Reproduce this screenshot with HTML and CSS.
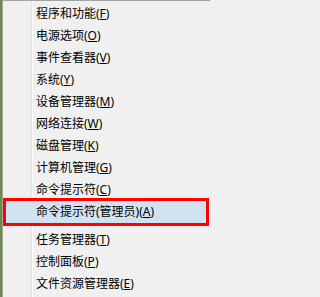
FILE: index.html
```html
<!DOCTYPE html>
<html lang="zh-CN">
<head>
<meta charset="utf-8">
<title>Win+X 菜单</title>
<link rel="stylesheet" href="styles.css">
</head>
<body>
<div class="screen">
  <div class="desktop-edge"></div>
  <ul class="menu">
    <li class="item">程序和功能(<u>F</u>)</li>
    <li class="item">电源选项(<u>O</u>)</li>
    <li class="item">事件查看器(<u>V</u>)</li>
    <li class="item">系统(<u>Y</u>)</li>
    <li class="item">设备管理器(<u>M</u>)</li>
    <li class="item">网络连接(<u>W</u>)</li>
    <li class="item">磁盘管理(<u>K</u>)</li>
    <li class="item">计算机管理(<u>G</u>)</li>
    <li class="item">命令提示符(<u>C</u>)</li>
    <li class="item item-active">命令提示符(管理员)(<u>A</u>)</li>
    <li class="separator"></li>
    <li class="item">任务管理器(<u>T</u>)</li>
    <li class="item">控制面板(<u>P</u>)</li>
    <li class="item">文件资源管理器(<u>E</u>)</li>
  </ul>
</div>
</body>
</html>
```

FILE: styles.css
```css
html, body {
  margin: 0;
  padding: 0;
  background: #f0f0f0;
}

.screen {
  display: flex;
  width: 210px;
  height: 297px;
  overflow: hidden;
  background: #f0f0f0;
}

.desktop-edge {
  flex: 0 0 2px;
  background: #6a8a45;
}

.menu {
  flex: 1 1 auto;
  margin: 0;
  padding: 2px 0 0 0;
  list-style: none;
  border-top: 1px solid #a3a3a3;
  border-left: 1px solid #a8a8a8;
  background-color: #f0f0f0;
  background-image: linear-gradient(to right,
    transparent 28px,
    #e2e3e3 28px, #e2e3e3 29px,
    #ffffff 29px, #ffffff 30px,
    transparent 30px);
  font-family: "Noto Sans", "Noto Sans CJK SC", sans-serif;
  font-size: 12px;
  color: #000;
}

.item {
  height: 22px;
  line-height: 22px;
  margin: 0 4px 0 3px;
  padding-left: 30px;
  white-space: nowrap;
}

.item u {
  text-decoration: underline;
  text-underline-offset: 1px;
  text-decoration-thickness: 1px;
}

.item-active {
  position: relative;
  background: #d1e2f2;
  outline: 3px solid #ff0000;
}

.separator {
  height: 6px;
}
```
